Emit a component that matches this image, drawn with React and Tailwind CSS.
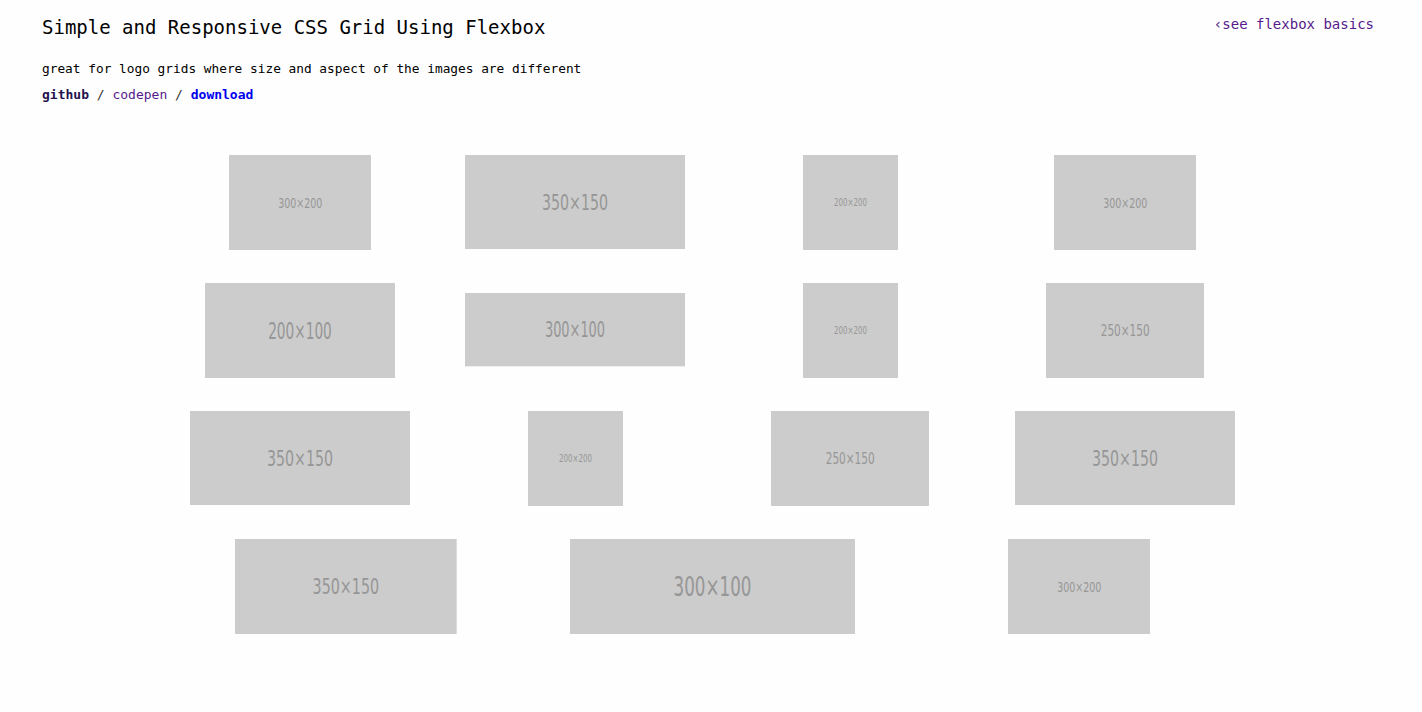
import React from "react";

const rows = [
  [[300, 200], [350, 150], [200, 200], [300, 200]],
  [[200, 100], [300, 100], [200, 200], [250, 150]],
  [[350, 150], [200, 200], [250, 150], [350, 150]],
  [[350, 150], [300, 100], [300, 200]],
];

// label width / font size in image units, read off the placeholder service
const labelSize = {
  "350x150": [105, 34],
  "300x200": [93, 29],
  "200x200": [69, 21],
  "300x100": [82, 28],
  "200x100": [67, 24],
  "250x150": [77, 26],
};

const Placeholder = ({ w, h, cellW }) => {
  const scale = Math.min((cellW * 0.8) / w, 95 / h, 1);
  const [tl, fs] = labelSize[`${w}x${h}`];
  const label = `${w}×${h}`;
  return (
    <svg
      viewBox={`0 0 ${w} ${h}`}
      style={{ width: w * scale, height: h * scale }}
      className="block"
    >
      <rect width={w} height={h} fill="#cccccc" />
      <text
        x={w / 2}
        y={h / 2}
        textAnchor="middle"
        dominantBaseline="central"
        fontSize={fs}
        textLength={tl}
        lengthAdjust="spacingAndGlyphs"
        fill="#969696"
        fontFamily="'Liberation Sans Narrow', 'DejaVu Sans Condensed', 'Liberation Sans', sans-serif"
      >
        {label}
      </text>
    </svg>
  );
};

const App = () => {
  return (
    <div className="min-h-screen bg-[#fefefe] font-['DejaVu_Sans_Mono',monospace] text-black">
      <div className="flex justify-between pl-[42px] pr-[48px] pt-[15px]">
        <div>
          <h1 className="text-[19px] leading-[24px]">
            Simple and Responsive CSS Grid Using Flexbox
          </h1>
          <p className="text-[12.8px] leading-[16px] mt-[22px]">
            great for logo grids where size and aspect of the images are different
          </p>
          <p className="text-[13px] leading-[16px] mt-[10px] text-[#333]">
            <a className="font-bold text-[#24124f]">github</a> /{" "}
            <a className="text-[#551a8b]">codepen</a> /{" "}
            <a className="font-bold text-[#0000ee]">download</a>
          </p>
        </div>
        <a className="text-[14px] leading-[18px] text-[#551a8b]">
          ‹see flexbox basics
        </a>
      </div>

      <div className="pl-[3px]">
        <div className="w-[1100px] mx-auto mt-[35px] flex flex-wrap">
          {rows.map((row, ri) =>
            row.map(([w, h], i) => (
              <div
                key={`${ri}-${i}`}
                className="basis-1/4 grow h-[128px] flex items-center justify-center"
              >
                <Placeholder w={w} h={h} cellW={1100 / row.length} />
              </div>
            )),
          )}
        </div>
      </div>
    </div>
  );
};

export default App;
